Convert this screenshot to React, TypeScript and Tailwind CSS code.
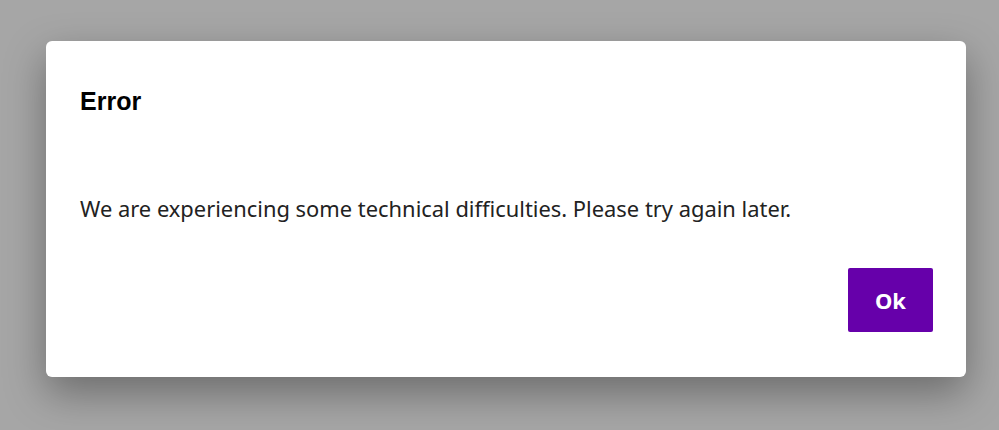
export default function App() {
  return (
    <div className="w-[999px] h-[430px] bg-[#a6a6a6] pt-[41px] pl-[46px]">
      <div className="w-[920px] h-[336px] bg-white rounded-[6px] shadow-[0_16px_40px_rgba(0,0,0,0.35)] flex flex-col px-[34px]">
        <h2 className="mt-[45px] text-[25px] leading-[30px] font-bold text-black" style={{ fontFamily: '"Liberation Sans", Arial, sans-serif' }}>
          Error
        </h2>
        <p className="mt-[78px] text-[21.9px] leading-[30px] text-[#222]" style={{ fontFamily: '"Noto Sans", sans-serif' }}>
          We are experiencing some technical difficulties. Please try again later.
        </p>
        <div className="flex justify-end mt-[44px] -mr-px">
          <button className="w-[85px] h-[64px] bg-[#6600aa] text-white text-[22px] font-bold rounded-[2px]" style={{ fontFamily: '"Noto Sans", sans-serif' }}>
            Ok
          </button>
        </div>
      </div>
    </div>
  );
}
